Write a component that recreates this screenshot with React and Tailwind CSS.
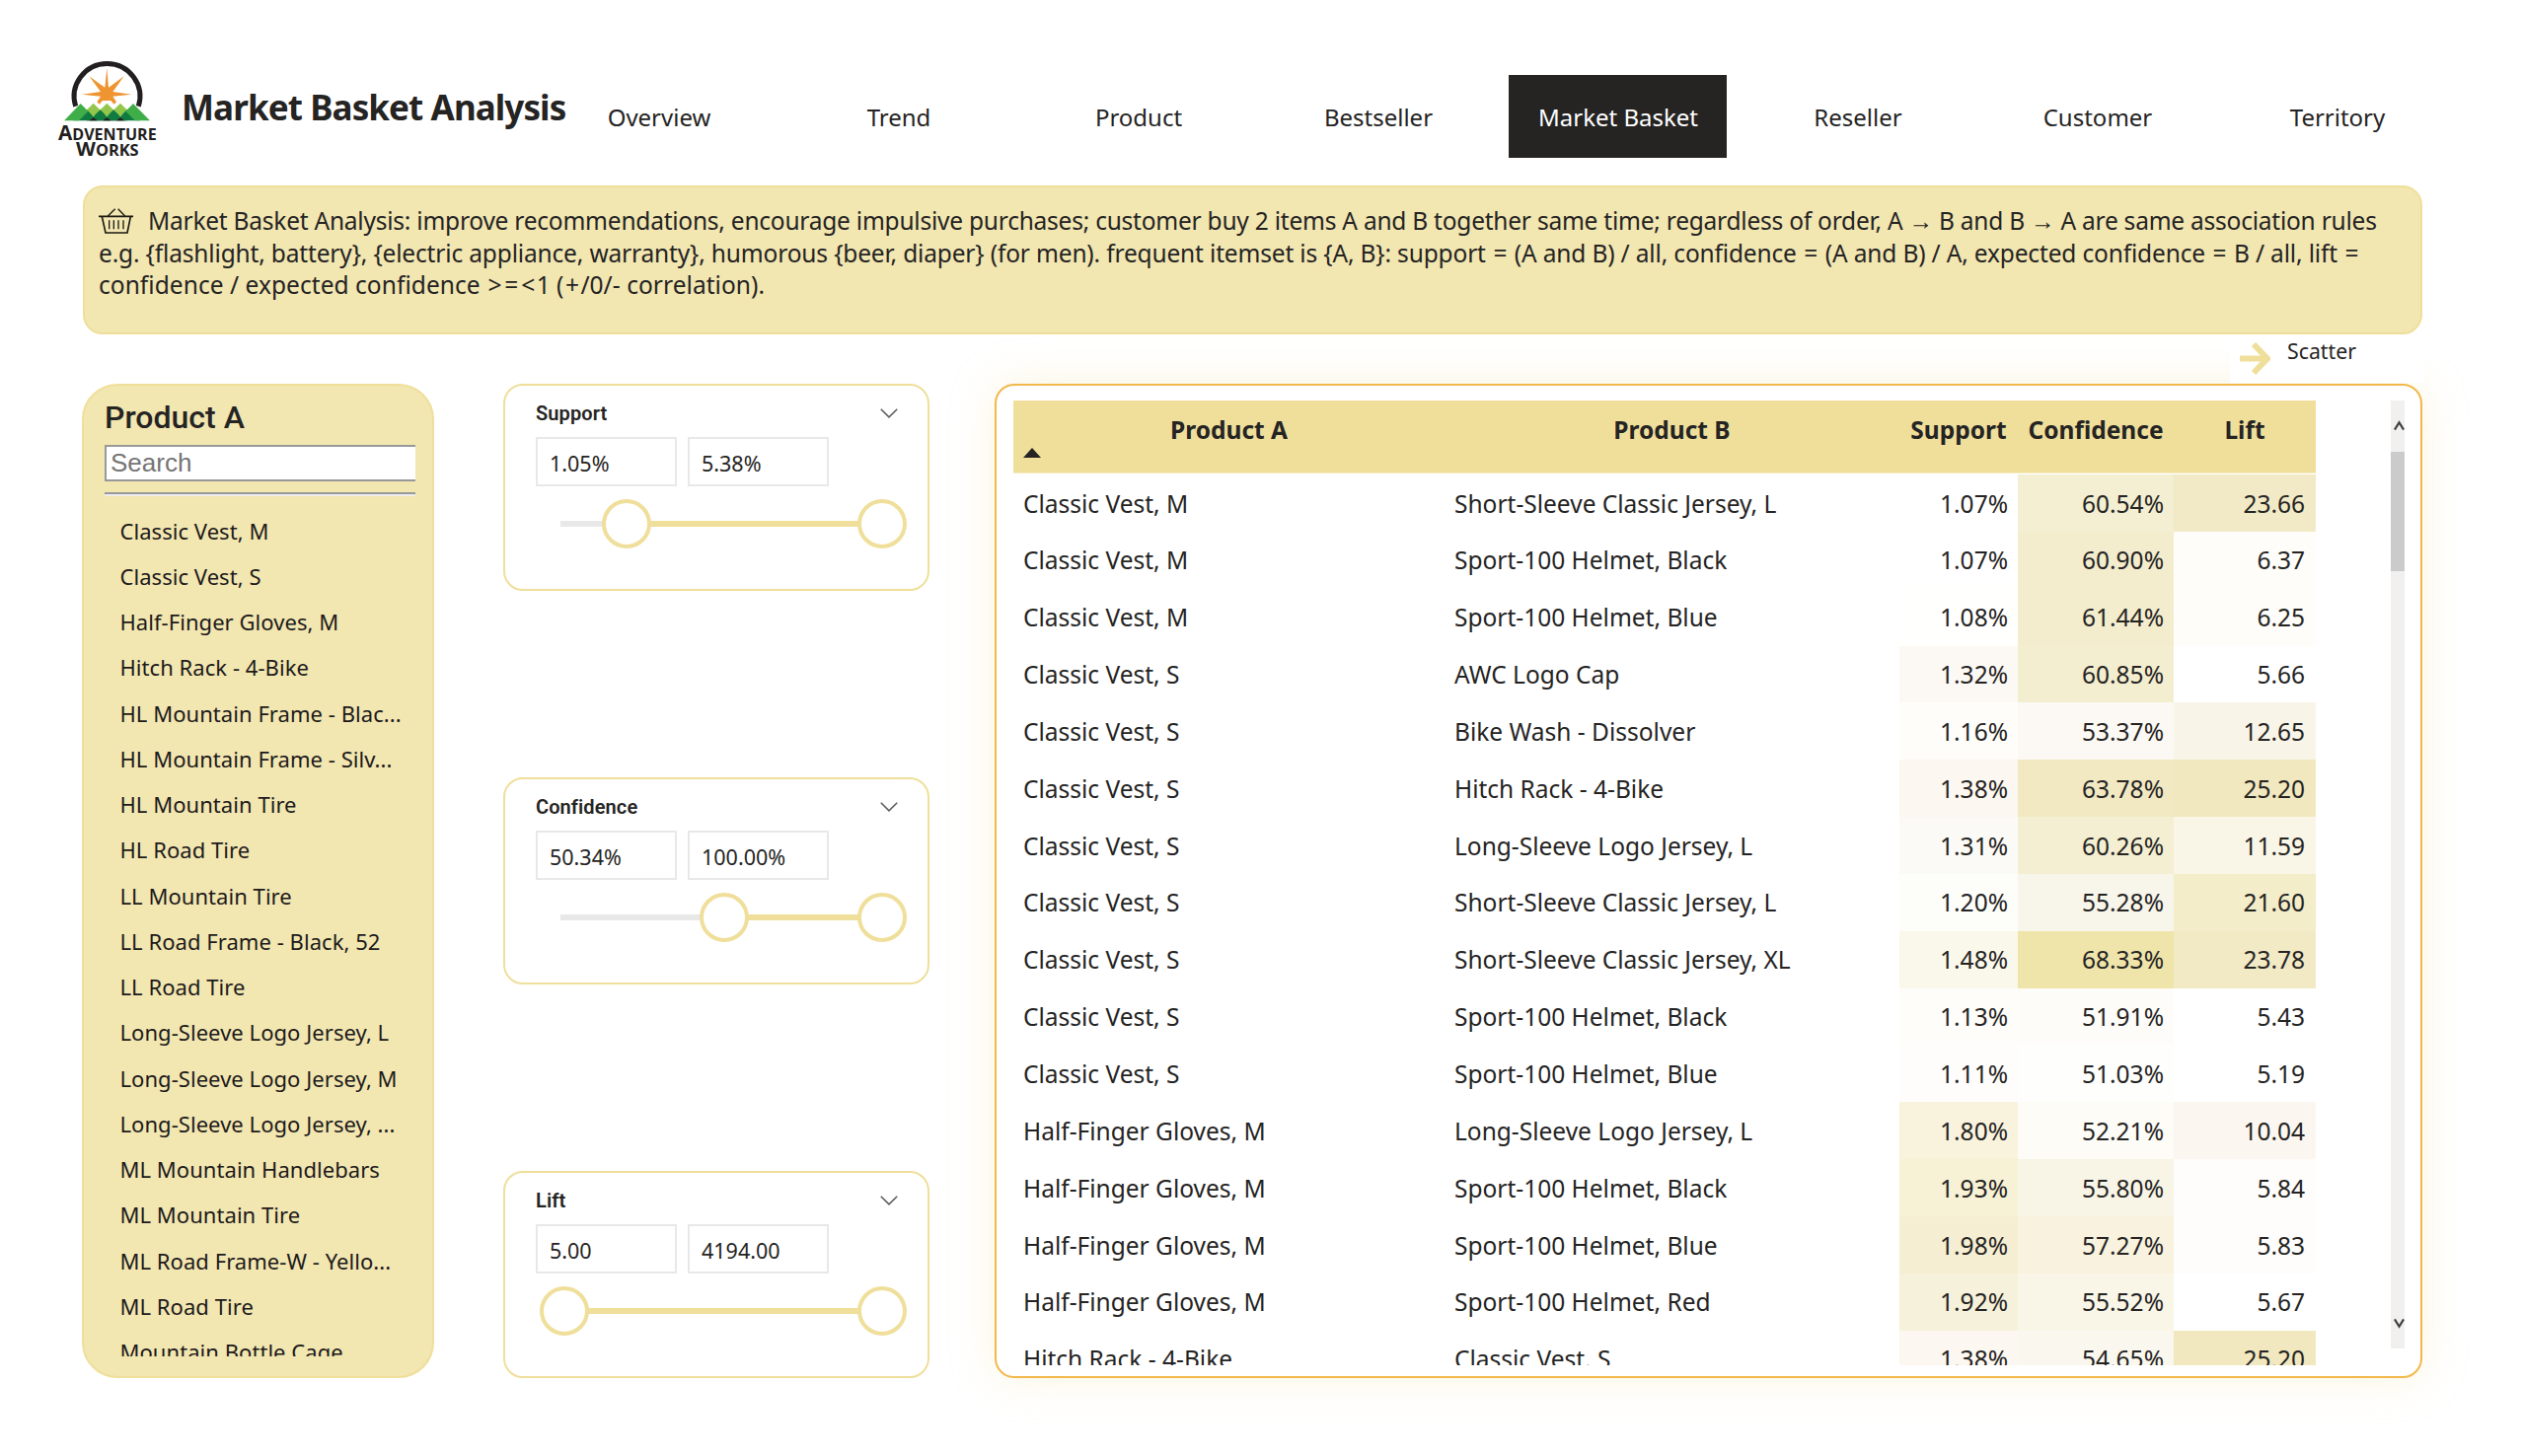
const NOTO = "font-['Noto_Sans',sans-serif]";
const ROBOTO = "font-['Roboto',sans-serif]";

const tabs = ['Overview', 'Trend', 'Product', 'Bestseller', 'Market Basket', 'Reseller', 'Customer', 'Territory'];

const products = [
  'Classic Vest, M', 'Classic Vest, S', 'Half-Finger Gloves, M', 'Hitch Rack - 4-Bike',
  'HL Mountain Frame - Blac...', 'HL Mountain Frame - Silv...', 'HL Mountain Tire', 'HL Road Tire',
  'LL Mountain Tire', 'LL Road Frame - Black, 52', 'LL Road Tire', 'Long-Sleeve Logo Jersey, L',
  'Long-Sleeve Logo Jersey, M', 'Long-Sleeve Logo Jersey, ...', 'ML Mountain Handlebars',
  'ML Mountain Tire', 'ML Road Frame-W - Yello...', 'ML Road Tire', 'Mountain Bottle Cage',
];

const sliders = [
  { title: 'Support', min: '1.05%', max: '5.38%', from: 67 },
  { title: 'Confidence', min: '50.34%', max: '100.00%', from: 166 },
  { title: 'Lift', min: '5.00', max: '4194.00', from: 4 },
];

const rows = [
  ['Classic Vest, M', 'Short-Sleeve Classic Jersey, L', '1.07%', '#ffffff', '60.54%', '#f4efd2', '23.66', '#f2eac6'],
  ['Classic Vest, M', 'Sport-100 Helmet, Black', '1.07%', '#ffffff', '60.90%', '#f3edce', '6.37', '#fefdf9'],
  ['Classic Vest, M', 'Sport-100 Helmet, Blue', '1.08%', '#fffffe', '61.44%', '#f3edcd', '6.25', '#fefdf9'],
  ['Classic Vest, S', 'AWC Logo Cap', '1.32%', '#fcf9f4', '60.85%', '#f4eed0', '5.66', '#ffffff'],
  ['Classic Vest, S', 'Bike Wash - Dissolver', '1.16%', '#fefdfa', '53.37%', '#fcf9f4', '12.65', '#f8f5e8'],
  ['Classic Vest, S', 'Hitch Rack - 4-Bike', '1.38%', '#fcf7f0', '63.78%', '#f2e9c3', '25.20', '#f1e8bf'],
  ['Classic Vest, S', 'Long-Sleeve Logo Jersey, L', '1.31%', '#fcfaf6', '60.26%', '#f4efd2', '11.59', '#f9f6e7'],
  ['Classic Vest, S', 'Short-Sleeve Classic Jersey, L', '1.20%', '#fdfdfa', '55.28%', '#f8f5ea', '21.60', '#f3edc9'],
  ['Classic Vest, S', 'Short-Sleeve Classic Jersey, XL', '1.48%', '#faf8eb', '68.33%', '#efe4aa', '23.78', '#f2e9c5'],
  ['Classic Vest, S', 'Sport-100 Helmet, Black', '1.13%', '#fefdfa', '51.91%', '#fdfcf9', '5.43', '#ffffff'],
  ['Classic Vest, S', 'Sport-100 Helmet, Blue', '1.11%', '#fefdfb', '51.03%', '#fefefd', '5.19', '#ffffff'],
  ['Half-Finger Gloves, M', 'Long-Sleeve Logo Jersey, L', '1.80%', '#f9f3de', '52.21%', '#fdfcf7', '10.04', '#fbf6ef'],
  ['Half-Finger Gloves, M', 'Sport-100 Helmet, Black', '1.93%', '#f7f1d5', '55.80%', '#f8f5e6', '5.84', '#fefdfb'],
  ['Half-Finger Gloves, M', 'Sport-100 Helmet, Blue', '1.98%', '#f5eed2', '57.27%', '#f9f2df', '5.83', '#fefdfb'],
  ['Half-Finger Gloves, M', 'Sport-100 Helmet, Red', '1.92%', '#f6f1da', '55.52%', '#f9f6e8', '5.67', '#ffffff'],
  ['Hitch Rack - 4-Bike', 'Classic Vest, S', '1.38%', '#fcf7f1', '54.65%', '#faf8ee', '25.20', '#f1e8bf'],
];

function Logo() {
  return (
    <svg viewBox="0 0 360 360" className="h-[120px] w-[120px] shrink-0">
      <path d="M80 173 A100 100 0 1 1 271 173" fill="none" stroke="#231f20" strokeWidth="15" />
      <path
        d="M175 56 L180 116 L227 82 L193 129 L250 137 L193 143 L204 160 L197 167 L187 156 L162 156 L152 167 L145 160 L156 143 L99 137 L156 129 L121 82 L169 116Z"
        fill="#ee9430"
      />
      <path d="M114 195 H236 V217 H114Z" fill="#231f20" />
      <path d="M134 164 L160 190 L134 213 L108 190Z M175 164 L201 190 L175 213 L149 190Z M216 164 L242 190 L216 213 L190 190Z" fill="#93c74c" />
      <path d="M73 217 L114 184 L128 198 L134 206 L140 198 L155 184 L169 198 L175 206 L181 198 L195 184 L210 198 L216 206 L222 198 L236 184 L276 217Z" fill="#0f7b40" />
      <path d="M45 217 L95 165 L118 188 L90 217Z M306 217 L255 165 L232 188 L260 217Z" fill="#3fae49" />
      <path d="M122 217 L134 207 L146 217Z M163 217 L175 207 L187 217Z M204 217 L216 207 L228 217Z" fill="#231f20" />
      <g fill="#231f20" fontFamily="Open Sans, sans-serif" fontWeight="700">
        <text x="27" y="275" fontSize="62" textLength="299" lengthAdjust="spacingAndGlyphs">
          A<tspan fontSize="48">DVENTURE</tspan>
        </text>
        <text x="81" y="323" fontSize="59" textLength="191" lengthAdjust="spacingAndGlyphs">
          W<tspan fontSize="47">ORKS</tspan>
        </text>
      </g>
    </svg>
  );
}

function BasketIcon() {
  return (
    <svg viewBox="0 0 105 78" className="mr-[15px] inline-block h-[26px] w-[35px] align-[-4px]" fill="none" stroke="#1c1a12">
      <path d="M0 25 H105" strokeWidth="5" />
      <path d="M10 26 L21 75 H87 L97 26" strokeWidth="5" />
      <path d="M28 24 L50 2 M80 24 L59 2" strokeWidth="4" />
      <path d="M32 37 V64 M46 37 V64 M60 37 V64 M75 37 V64" strokeWidth="4" />
    </svg>
  );
}

/* Math operators get a little extra room on both sides. */
function Formula({ children }) {
  return children.split(/([=<>+])/).map((part, i) =>
    i % 2 ? <span key={i} className="px-[1.4px]">{part}</span> : part
  );
}

function SliderCard({ title, min, max, from }) {
  return (
    <section className="flex h-[210px] w-[432px] flex-col rounded-[20px] border-2 border-[#efdf9b] bg-white pt-[16px] pl-[31px]">
      <div className="flex items-center justify-between pr-[30px]">
        <h2 className={`text-[20px] leading-[24px] font-semibold tracking-[0.1px] text-[#252423] ${ROBOTO}`}>{title}</h2>
        <svg viewBox="0 0 18 10" className="h-[10px] w-[18px]" fill="none" stroke="#605e5c" strokeWidth="1.6">
          <path d="M0.8 0.8 L9 8.8 L17.2 0.8" />
        </svg>
      </div>
      <div className={`mt-[12px] flex gap-[11px] text-[21.5px] text-[#252423] ${NOTO}`}>
        <div className="flex h-[50px] w-[143px] items-center border-2 border-[#e8e8e8] pt-[4px] pl-[12px]">{min}</div>
        <div className="flex h-[50px] w-[143px] items-center border-2 border-[#e8e8e8] pt-[4px] pl-[12px]">{max}</div>
      </div>
      <div className="relative mt-[13px] ml-[25px] h-[50px] w-[326px]">
        <div className="absolute top-[22px] h-[6px] w-full bg-[#e8e8e8]" />
        <div className="absolute top-[22px] right-0 h-[6px] bg-[#efdf9b]" style={{ left: from }} />
        <div className="absolute top-0 h-[50px] w-[50px] -translate-x-1/2 rounded-full border-4 border-[#efdf9b] bg-white" style={{ left: from }} />
        <div className="absolute top-0 left-full h-[50px] w-[50px] -translate-x-1/2 rounded-full border-4 border-[#efdf9b] bg-white" />
      </div>
    </section>
  );
}

const GRID = 'grid grid-cols-[437px_461px_120px_158px_144px]';

export default function App() {
  return (
    <div className={`flex h-[1476px] w-[2556px] flex-col overflow-hidden bg-white text-[#252423] ${NOTO}`}>
      <header className="flex h-[188px] shrink-0 pl-[50px]">
        <div className="mt-[50px]"><Logo /></div>
        <h1 className="mt-[84px] ml-[14px] w-[373px] shrink-0 text-[35px] leading-[50px] font-bold tracking-[-0.9px] whitespace-nowrap">
          Market Basket Analysis
        </h1>
        <nav className="mt-[76px] flex gap-[22px]">
          {tabs.map((tab) => (
            <div
              key={tab}
              className={`flex h-[84px] w-[221px] items-center justify-center pt-[2px] pl-[1px] text-[24px] whitespace-nowrap ${
                tab === 'Market Basket' ? 'bg-[#252423] text-white' : 'text-[#252423]'
              }`}
            >
              {tab}
            </div>
          ))}
        </nav>
      </header>

      <section className="ml-[84px] h-[151px] w-[2371px] shrink-0 rounded-[20px] border-2 border-[#efdf9b] bg-[#f2e6b1] pt-[18px] pl-[14px] text-[24.5px] leading-[32.5px] whitespace-nowrap">
        <p className="tracking-[-0.23px]">
          <BasketIcon />
          Market Basket Analysis: improve recommendations, encourage impulsive purchases; customer buy 2 items A and B together same time; regardless of order, A → B and B → A are same association rules
        </p>
        <p className="tracking-[-0.16px]">
          <Formula>{'e.g. {flashlight, battery}, {electric appliance, warranty}, humorous {beer, diaper} (for men). frequent itemset is {A, B}: support = (A and B) / all, confidence = (A and B) / A, expected confidence = B / all, lift ='}</Formula>
        </p>
        <p className="tracking-[0.05px]">
          <Formula>{'confidence / expected confidence >=<1 (+/0/- correlation).'}</Formula>
        </p>
      </section>

      <div className="relative z-10 ml-[2260px] flex h-[49px] w-[196px] shrink-0 bg-white pl-[10px]">
        <svg viewBox="0 0 31 33" className="mt-[8px] h-[33px] w-[31px]" fill="none" stroke="#efdf9b" strokeWidth="6">
          <path d="M0 16.5 H28 M14 2 L28 16.5 L14 31" />
        </svg>
        <span className="mt-[3px] ml-[17px] text-[21.3px] leading-[28px]">Scatter</span>
      </div>

      <main className="mt-px flex h-[1008px] shrink-0 pl-[83px]">
        <aside className="w-[357px] rounded-[36px] border-2 border-[#efdf9b] bg-[#f2e6b1] pt-[12px] pl-[21px]">
          <h2 className={`text-[32px] leading-[40px] font-medium ${ROBOTO}`}>Product A</h2>
          <div className="mt-[8px] flex h-[37px] w-[315px] items-center border-2 border-r-0 border-[#999] bg-white pl-[4px] font-['Liberation_Sans',Arial,sans-serif] text-[26px] text-[#757575]">
            Search
          </div>
          <div className="mt-[11px] h-[4px] w-[315px] border-t-2 border-[#999] bg-[#eee]" />
          <ul className="mt-[12px] h-[860px] overflow-hidden pl-[15.5px] text-[22px] tracking-[0.05px] whitespace-nowrap text-[#201a1a]">
            {products.map((p) => (
              <li key={p} className="flex h-[46.25px] items-center">{p}</li>
            ))}
          </ul>
        </aside>

        <div className="ml-[70px] flex flex-col justify-between">
          {sliders.map((s) => <SliderCard key={s.title} {...s} />)}
        </div>

        <section className="ml-[66px] flex h-[1008px] w-[1447px] rounded-[20px] border-2 border-[#f2b84b] bg-white pt-[15px] pl-[17px] shadow-[0_0_44px_rgba(239,223,155,0.34)]">
          <div className="h-[978px] w-[1320px] overflow-hidden text-[24.5px]">
            <div className={`${GRID} relative mb-[1px] h-[74px] border-b border-[#f5ecc4] bg-[#efdf9b] pt-[13px] text-center leading-[33px] font-bold`}>
              <span>Product A</span>
              <span>Product B</span>
              <span>Support</span>
              <span>Confidence</span>
              <span>Lift</span>
              <svg viewBox="0 0 18 10" className="absolute top-[48px] left-[10px] h-[10px] w-[18px]">
                <path d="M9 0 L18 10 H0Z" fill="#252423" />
              </svg>
            </div>
            {rows.map(([a, b, s, sc, c, cc, l, lc], i) => (
              <div key={i} className={`${GRID} h-[57.85px] whitespace-nowrap`}>
                <div className="flex items-center pt-[2px] pl-[10px]">{a}</div>
                <div className="flex items-center pt-[2px] pl-[10px]">{b}</div>
                <div className="flex items-center justify-end pt-[2px] pr-[10px]" style={{ backgroundColor: sc }}>{s}</div>
                <div className="flex items-center justify-end pt-[2px] pr-[10px]" style={{ backgroundColor: cc }}>{c}</div>
                <div className="flex items-center justify-end pt-[2px] pr-[11px]" style={{ backgroundColor: lc }}>{l}</div>
              </div>
            ))}
          </div>
          <div className="ml-[76px] flex h-[961px] w-[14px] flex-col items-end bg-[#f1f0ef]">
            <svg viewBox="0 0 12 11" className="mt-[20px] h-[11px] w-[11px]" fill="none" stroke="#3f3f3f" strokeWidth="2.4">
              <path d="M1 10 L6 2 L11 10" />
            </svg>
            <div className="mt-[21px] h-[121px] w-full bg-[#cbcbcb]" />
            <svg viewBox="0 0 12 11" className="mt-auto mb-[20px] h-[11px] w-[11px]" fill="none" stroke="#3f3f3f" strokeWidth="2.4">
              <path d="M1 1 L6 9 L11 1" />
            </svg>
          </div>
        </section>
      </main>
    </div>
  );
}
